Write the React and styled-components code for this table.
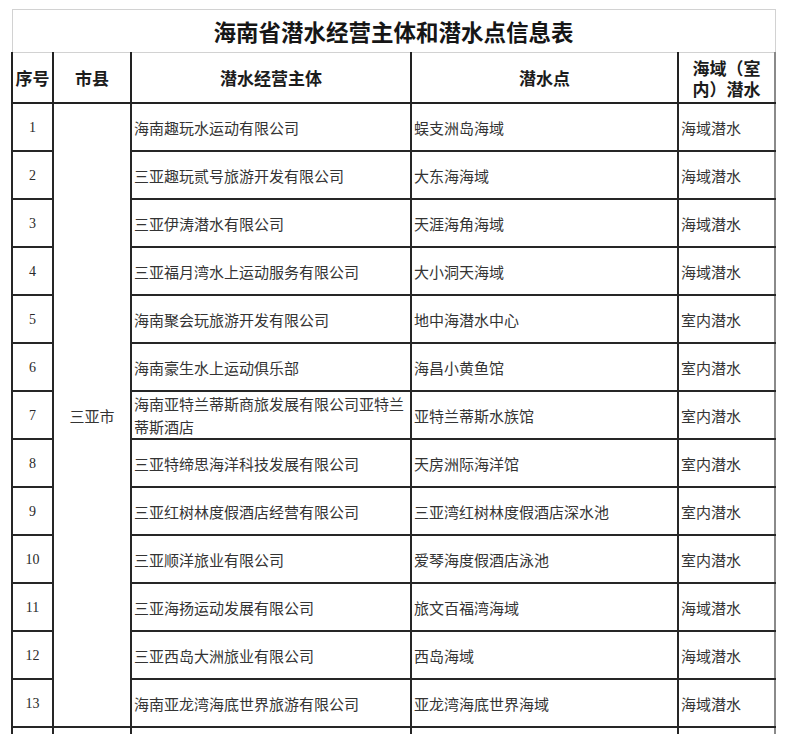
import React from 'react';
import styled, { createGlobalStyle } from 'styled-components';

const GlobalStyle = createGlobalStyle`
    html, body {
        margin: 0;
        padding: 0;
        background: #ffffff;
        overflow: hidden;
    }
`

const Page = styled.div`
    height: 734px;
    overflow: hidden;
    padding: 9px 0 0 11px;
    box-sizing: border-box;
    background: #ffffff;
    font-family: "Noto Sans CJK SC", "Noto Sans", sans-serif;
`

const Sheet = styled.table`
    border-collapse: collapse;
    table-layout: fixed;
    width: 763px;
`

const TitleCell = styled.th`
    height: 42px;
    padding: 0;
    border: 1px solid #d2d2d2;
    font-size: 22.5px;
    font-weight: 700;
    color: #161616;
    text-align: center;
`

const HeadCell = styled.th`
    height: 49px;
    padding: ${p => (p.$last ? '0 6px' : '0 1px')};
    border: 2px solid #222;
    border-top: 1px solid #d2d2d2;
    border-right-color: ${p => (p.$last ? '#8a8a8a' : '#222')};
    font-size: 17px;
    line-height: 21px;
    font-weight: 700;
    color: #1c1c1c;
    text-align: center;
    white-space: ${p => (p.$nowrap ? 'nowrap' : 'normal')};
`

const DataRow = styled.tr`
    height: 48px;
`

const Cell = styled.td`
    padding: 0 2px;
    border: 2px solid #262626;
    border-right-color: ${p => (p.$last ? '#8a8a8a' : '#262626')};
    font-size: 15px;
    line-height: 23px;
    color: #343434;
    text-align: left;
    vertical-align: middle;
    word-break: break-all;
`

const NumCell = styled(Cell)`
    font-family: "Liberation Serif", "Times New Roman", serif;
    font-size: 14px;
    text-align: center;
    color: #2a2a2a;
`

const CityCell = styled(Cell)`
    text-align: center;
`

const rows = [
    ['海南趣玩水运动有限公司', '蜈支洲岛海域', '海域潜水'],
    ['三亚趣玩贰号旅游开发有限公司', '大东海海域', '海域潜水'],
    ['三亚伊涛潜水有限公司', '天涯海角海域', '海域潜水'],
    ['三亚福月湾水上运动服务有限公司', '大小洞天海域', '海域潜水'],
    ['海南聚会玩旅游开发有限公司', '地中海潜水中心', '室内潜水'],
    ['海南豪生水上运动俱乐部', '海昌小黄鱼馆', '室内潜水'],
    ['海南亚特兰蒂斯商旅发展有限公司亚特兰蒂斯酒店', '亚特兰蒂斯水族馆', '室内潜水'],
    ['三亚特缔思海洋科技发展有限公司', '天房洲际海洋馆', '室内潜水'],
    ['三亚红树林度假酒店经营有限公司', '三亚湾红树林度假酒店深水池', '室内潜水'],
    ['三亚顺洋旅业有限公司', '爱琴海度假酒店泳池', '室内潜水'],
    ['三亚海扬运动发展有限公司', '旅文百福湾海域', '海域潜水'],
    ['三亚西岛大洲旅业有限公司', '西岛海域', '海域潜水'],
    ['海南亚龙湾海底世界旅游有限公司', '亚龙湾海底世界海域', '海域潜水'],
]

const App = () => {
    return (
        <Page>
            <GlobalStyle />
            <Sheet>
                <colgroup>
                    <col style={{ width: 41 }} />
                    <col style={{ width: 78 }} />
                    <col style={{ width: 280 }} />
                    <col style={{ width: 267 }} />
                    <col style={{ width: 97 }} />
                </colgroup>
                <thead>
                    <tr>
                        <TitleCell colSpan={5}>海南省潜水经营主体和潜水点信息表</TitleCell>
                    </tr>
                    <tr>
                        <HeadCell $nowrap>序号</HeadCell>
                        <HeadCell>市县</HeadCell>
                        <HeadCell>潜水经营主体</HeadCell>
                        <HeadCell>潜水点</HeadCell>
                        <HeadCell $last>海域（室内）潜水</HeadCell>
                    </tr>
                </thead>
                <tbody>
                    {rows.map((r, i) => (
                        <DataRow key={i}>
                            <NumCell>{i + 1}</NumCell>
                            {i === 0 ? <CityCell rowSpan={rows.length}>三亚市</CityCell> : null}
                            <Cell>{r[0]}</Cell>
                            <Cell>{r[1]}</Cell>
                            <Cell $last>{r[2]}</Cell>
                        </DataRow>
                    ))}
                    <DataRow>
                        <NumCell></NumCell>
                        <CityCell></CityCell>
                        <Cell></Cell>
                        <Cell></Cell>
                        <Cell $last></Cell>
                    </DataRow>
                </tbody>
            </Sheet>
        </Page>
    )
}

export default App;
